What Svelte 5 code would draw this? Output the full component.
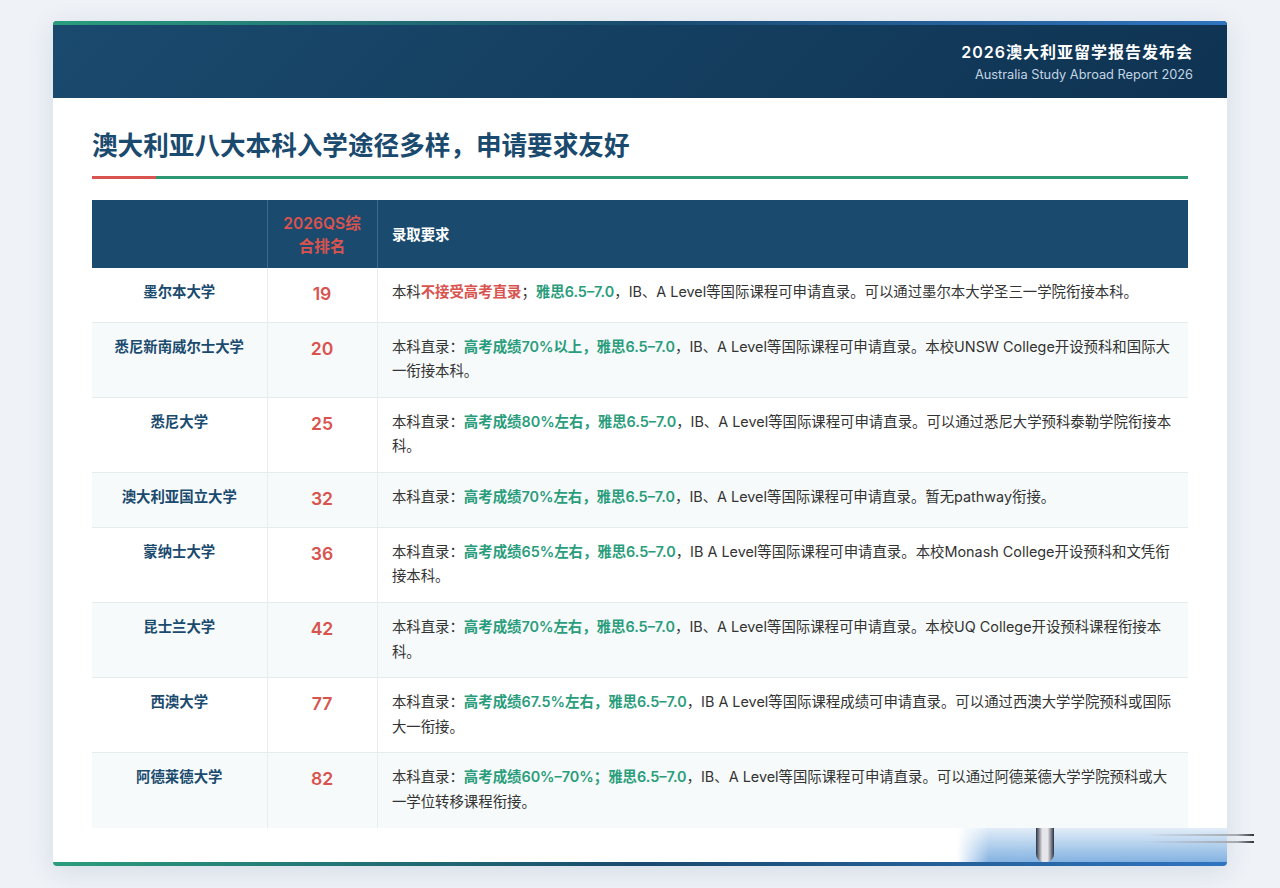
<script lang="ts">
  type Seg = [string, ("red" | "green")?];

  const rows: { name: string; rank: number; text: Seg[] }[] = [
    {
      name: "墨尔本大学",
      rank: 19,
      text: [
        ["本科"],
        ["不接受高考直录", "red"],
        ["；"],
        ["雅思6.5–7.0", "green"],
        ["，IB、A Level等国际课程可申请直录。可以通过墨尔本大学圣三一学院衔接本科。"],
      ],
    },
    {
      name: "悉尼新南威尔士大学",
      rank: 20,
      text: [
        ["本科直录："],
        ["高考成绩70%以上，雅思6.5–7.0", "green"],
        ["，IB、A Level等国际课程可申请直录。本校UNSW College开设预科和国际大一衔接本科。"],
      ],
    },
    {
      name: "悉尼大学",
      rank: 25,
      text: [
        ["本科直录："],
        ["高考成绩80%左右，雅思6.5–7.0", "green"],
        ["，IB、A Level等国际课程可申请直录。可以通过悉尼大学预科泰勒学院衔接本科。"],
      ],
    },
    {
      name: "澳大利亚国立大学",
      rank: 32,
      text: [
        ["本科直录："],
        ["高考成绩70%左右，雅思6.5–7.0", "green"],
        ["，IB、A Level等国际课程可申请直录。暂无pathway衔接。"],
      ],
    },
    {
      name: "蒙纳士大学",
      rank: 36,
      text: [
        ["本科直录："],
        ["高考成绩65%左右，雅思6.5–7.0", "green"],
        ["，IB A Level等国际课程可申请直录。本校Monash College开设预科和文凭衔接本科。"],
      ],
    },
    {
      name: "昆士兰大学",
      rank: 42,
      text: [
        ["本科直录："],
        ["高考成绩70%左右，雅思6.5–7.0", "green"],
        ["，IB、A Level等国际课程可申请直录。本校UQ College开设预科课程衔接本科。"],
      ],
    },
    {
      name: "西澳大学",
      rank: 77,
      text: [
        ["本科直录："],
        ["高考成绩67.5%左右，雅思6.5–7.0", "green"],
        ["，IB A Level等国际课程成绩可申请直录。可以通过西澳大学学院预科或国际大一衔接。"],
      ],
    },
    {
      name: "阿德莱德大学",
      rank: 82,
      text: [
        ["本科直录："],
        ["高考成绩60%–70%；雅思6.5–7.0", "green"],
        ["，IB、A Level等国际课程可申请直录。可以通过阿德莱德大学学院预科或大一学位转移课程衔接。"],
      ],
    },
  ];
</script>

<div class="slide">
  <header class="banner">
    <div class="banner-title">2026澳大利亚留学报告发布会</div>
    <div class="banner-sub">Australia Study Abroad Report 2026</div>
  </header>

  <main class="content">
    <h1>澳大利亚八大本科入学途径多样，申请要求友好</h1>
    <div class="rule"></div>

    <table>
      <colgroup>
        <col class="col-name" />
        <col class="col-rank" />
        <col />
      </colgroup>
      <thead>
        <tr>
          <th></th>
          <th class="th-rank">2026QS综合排名</th>
          <th class="th-req">录取要求</th>
        </tr>
      </thead>
      <tbody>
        {#each rows as row}
          <tr>
            <td class="name">{row.name}</td>
            <td class="rank">{row.rank}</td>
            <td class="req">
              {#each row.text as [str, tone]}
                {#if tone}<strong class={tone}>{str}</strong>{:else}{str}{/if}
              {/each}
            </td>
          </tr>
        {/each}
      </tbody>
    </table>
  </main>

  <div class="watermark">
    <span class="wm-glow"></span>
    <span class="wm-pill"></span>
    <span class="wm-line one"></span>
    <span class="wm-line two"></span>
  </div>
</div>

<style>
  :global(body) {
    margin: 0;
    background: #eff2f7;
    height: 888px;
    overflow: hidden;
    font-family: Inter, "Noto Sans CJK SC", sans-serif;
  }

  .slide {
    position: relative;
    box-sizing: border-box;
    width: 1174px;
    height: 845px;
    margin: 21px auto 0;
    background: #fff;
    border-radius: 4px;
    box-shadow: 0 6px 28px rgba(26, 74, 110, 0.12);
  }

  .slide::before,
  .slide::after {
    content: "";
    position: absolute;
    left: 0;
    right: 0;
    height: 4px;
    background: linear-gradient(90deg, #2a9d7c 0%, #1a4a6e 50%, #2f74c0 100%);
  }

  .slide::before {
    top: 0;
    border-radius: 4px 4px 0 0;
  }

  .slide::after {
    bottom: 0;
    border-radius: 0 0 4px 4px;
  }

  .banner {
    box-sizing: border-box;
    height: 77px;
    padding: 20px 34px 0 0;
    text-align: right;
    background: linear-gradient(135deg, #1a4a6e 0%, #0f3352 100%);
    border-radius: 4px 4px 0 0;
  }

  .banner-title {
    font-size: 16px;
    line-height: 22px;
    font-weight: 600;
    letter-spacing: 1px;
    color: #fff;
  }

  .banner-sub {
    margin-top: 2px;
    font-size: 12.8px;
    line-height: 20px;
    color: #c3d5e4;
  }

  .content {
    padding: 29px 39px 0;
  }

  h1 {
    margin: 0;
    font-size: 25.6px;
    line-height: 38px;
    font-weight: 700;
    color: #1a4a6e;
  }

  .rule {
    position: relative;
    height: 3px;
    margin: 11px 0 21px;
    background: #2d9672;
  }

  .rule::before {
    content: "";
    position: absolute;
    left: 0;
    top: 0;
    bottom: 0;
    width: 64px;
    background: #d9534f;
  }

  table {
    width: 100%;
    table-layout: fixed;
    border-collapse: collapse;
  }

  .col-name {
    width: 175px;
  }

  .col-rank {
    width: 110px;
  }

  th {
    height: 68px;
    box-sizing: border-box;
    padding: 0 14.4px;
    background: #1a4a6e;
    border-right: 1px solid #3d6a8b;
    color: #fff;
    font-size: 14.4px;
    font-weight: 600;
  }

  th:last-child {
    border-right: 0;
  }

  .th-rank {
    padding: 2px 12px 0;
    font-size: 15.6px;
    line-height: 23px;
    color: #d9534f;
  }

  .th-req {
    padding-bottom: 2px;
    text-align: left;
  }

  td {
    padding: 12px 14.4px 13.2px;
    border-right: 1px solid #e8eef0;
    border-bottom: 1px solid #e4ecee;
    font-size: 14.4px;
    line-height: 24.48px;
    vertical-align: top;
    color: #333;
  }

  td:last-child {
    border-right: 0;
  }

  tbody tr:nth-child(even) td {
    background: #f6fafa;
  }

  tbody tr:last-child td {
    border-bottom: 0;
  }

  .name {
    text-align: center;
    font-weight: 600;
    color: #1a4a6e;
  }

  .rank {
    text-align: center;
    font-size: 17.6px;
    line-height: 28.6px;
    font-weight: 600;
    color: #d9534f;
  }

  .red {
    font-weight: 600;
    color: #d9534f;
  }

  .green {
    font-weight: 600;
    color: #2a9d7c;
  }

  .watermark {
    position: absolute;
    left: 904px;
    right: 0;
    bottom: 4px;
    height: 34px;
  }

  .wm-glow {
    position: absolute;
    inset: 0;
    background: linear-gradient(180deg, rgba(110, 165, 220, 0.2) 0%, rgba(110, 165, 220, 0.85) 100%);
    -webkit-mask-image: linear-gradient(90deg, transparent 0, #000 32px);
    mask-image: linear-gradient(90deg, transparent 0, #000 32px);
  }

  .wm-pill {
    position: absolute;
    left: 79px;
    top: 0;
    bottom: 0;
    width: 18px;
    border-radius: 0 0 8px 8px;
    background: linear-gradient(90deg, #2b3040 0%, #e6e6ea 35%, #e6e6ea 65%, #2b3040 100%);
  }

  .wm-line {
    position: absolute;
    right: -27px;
    width: 110px;
    height: 2px;
    background: linear-gradient(90deg, transparent, #a4a8ae 85%, #333);
  }

  .wm-line.one {
    top: 6px;
  }

  .wm-line.two {
    top: 13px;
  }
</style>
